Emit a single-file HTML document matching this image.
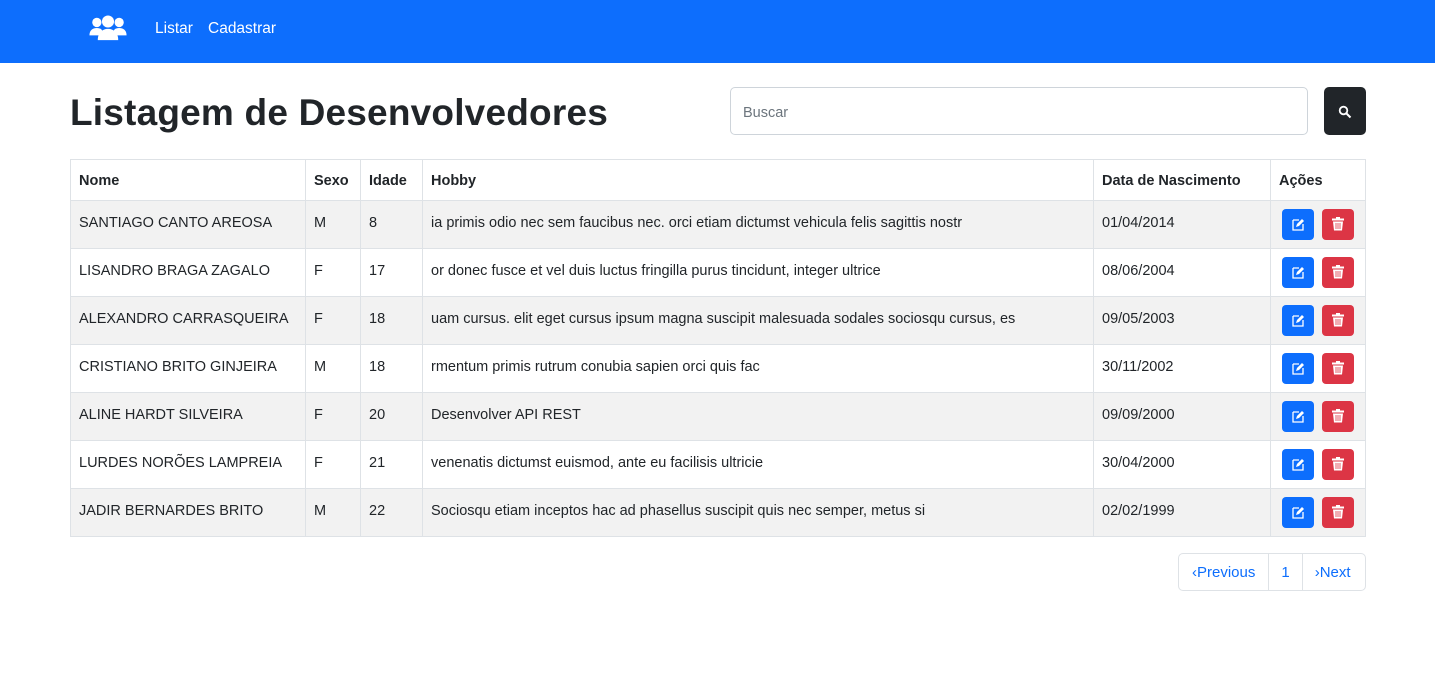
<!DOCTYPE html>
<html><head><meta charset="utf-8"><style>
*{box-sizing:border-box;margin:0;padding:0}
body{font-family:"Liberation Sans",sans-serif;background:#fff;color:#212529;width:1435px;height:697px;position:relative;overflow:hidden}
.nav{position:absolute;left:0;top:0;width:1435px;height:63px;background:#0d6efd}
.nav a{position:absolute;top:20px;color:#fff;font-size:15.5px;text-decoration:none}
h1{position:absolute;left:70px;top:92px;font-size:37px;font-weight:bold;letter-spacing:0.2px}
.search{position:absolute;left:730px;top:87px;width:578px;height:48px;border:1px solid #ced4da;border-radius:5px;padding:0 12px;line-height:50px;color:#6c757d;font-size:14.5px}
.sbtn{position:absolute;left:1324px;top:87px;width:42px;height:48px;background:#212529;border-radius:5px}
table{position:absolute;left:70px;top:159px;width:1296px;border-collapse:collapse;font-size:14.5px}
td,th{border:1px solid #dee2e6;padding:0 8px;text-align:left;height:48px}
td{padding-bottom:4px}
th{height:41px;font-weight:bold;padding-top:2px}
tr:nth-child(even) td{background:#f2f2f2}
.b{display:inline-block;width:32px;height:31px;border-radius:4px;vertical-align:middle;position:relative;margin-left:7px}
.e{background:#0d6efd}.d{background:#dc3545;margin-left:8px}
.pg{position:absolute;left:1178px;top:553px;height:38px;width:188px;display:flex;border:1px solid #dee2e6;border-radius:5px;font-size:15px;color:#0d6efd}
.pg div{line-height:38px;padding:0 12px;border-left:1px solid #dee2e6}
.pg div:first-child{border-left:none;padding:0 13px}
</style></head><body>
<div class="nav">
<svg style="position:absolute;left:88px;top:15px" width="40" height="26" viewBox="0 0 40 28" fill="#fff">
<circle cx="8" cy="8" r="5"/><path d="M0 22c0-6 4-8 8-8s6 2 6 4v4z"/>
<circle cx="32" cy="8" r="5"/><path d="M40 22c0-6-4-8-8-8s-6 2-6 4v4z"/>
<circle cx="20" cy="7" r="6.5"/><path d="M9 27c0-8 5-12 11-12s11 4 11 12z"/>
</svg>
<a style="left:155px">Listar</a><a style="left:208px">Cadastrar</a></div>
<h1>Listagem de Desenvolvedores</h1>
<div class="search">Buscar</div>
<div class="sbtn"><svg style="position:absolute;left:14px;top:18px" width="14" height="14" viewBox="0 0 14 14"><circle cx="5.5" cy="5.5" r="3.8" stroke="#fff" stroke-width="1.8" fill="none"/><path d="M8.5 8.5l4 4" stroke="#fff" stroke-width="2"/></svg></div>
<table>
<tr><th style="width:235px">Nome</th><th style="width:55px">Sexo</th><th style="width:62px">Idade</th><th style="width:671px">Hobby</th><th style="width:177px">Data de Nascimento</th><th>Ações</th></tr>
<tr><td>SANTIAGO CANTO AREOSA</td><td>M</td><td>8</td><td>ia primis odio nec sem faucibus nec. orci etiam dictumst vehicula felis sagittis nostr</td><td>01/04/2014</td><td>ACT</td></tr>
<tr><td>LISANDRO BRAGA ZAGALO</td><td>F</td><td>17</td><td>or donec fusce et vel duis luctus fringilla purus tincidunt, integer ultrice</td><td>08/06/2004</td><td>ACT</td></tr>
<tr><td>ALEXANDRO CARRASQUEIRA</td><td>F</td><td>18</td><td>uam cursus. elit eget cursus ipsum magna suscipit malesuada sodales sociosqu cursus, es</td><td>09/05/2003</td><td>ACT</td></tr>
<tr><td>CRISTIANO BRITO GINJEIRA</td><td>M</td><td>18</td><td>rmentum primis rutrum conubia sapien orci quis fac</td><td>30/11/2002</td><td>ACT</td></tr>
<tr><td>ALINE HARDT SILVEIRA</td><td>F</td><td>20</td><td>Desenvolver API REST</td><td>09/09/2000</td><td>ACT</td></tr>
<tr><td>LURDES NORÕES LAMPREIA</td><td>F</td><td>21</td><td>venenatis dictumst euismod, ante eu facilisis ultricie</td><td>30/04/2000</td><td>ACT</td></tr>
<tr><td>JADIR BERNARDES BRITO</td><td>M</td><td>22</td><td>Sociosqu etiam inceptos hac ad phasellus suscipit quis nec semper, metus si</td><td>02/02/1999</td><td>ACT</td></tr>
</table>
<div class="pg"><div>‹Previous</div><div>1</div><div>›Next</div></div>
<script>
var act='<span class="b e"><svg style="position:absolute;left:10px;top:9px" width="13" height="13" viewBox="0 0 13 13"><path d="M1 2h6M1 2v10h10V6" stroke="#fff" stroke-width="1.3" fill="none"/><path d="M4 9l1-3 5-5 2 2-5 5z" fill="#fff"/></svg></span><span class="b d"><svg style="position:absolute;left:10px;top:8px" width="12" height="14" viewBox="0 0 12 14" fill="#fff"><rect x="0" y="1.5" width="12" height="2"/><rect x="4" y="0" width="4" height="2"/><path d="M1 4.5h10l-1 9H2z"/><path d="M4 6v6M6 6v6M8 6v6" stroke="#dc3545" stroke-width=".8"/></svg></span>';
document.querySelectorAll('td').forEach(function(t){if(t.textContent=='ACT'){t.innerHTML=act;t.style.padding='0 4px'}});
</script>
</body></html>
